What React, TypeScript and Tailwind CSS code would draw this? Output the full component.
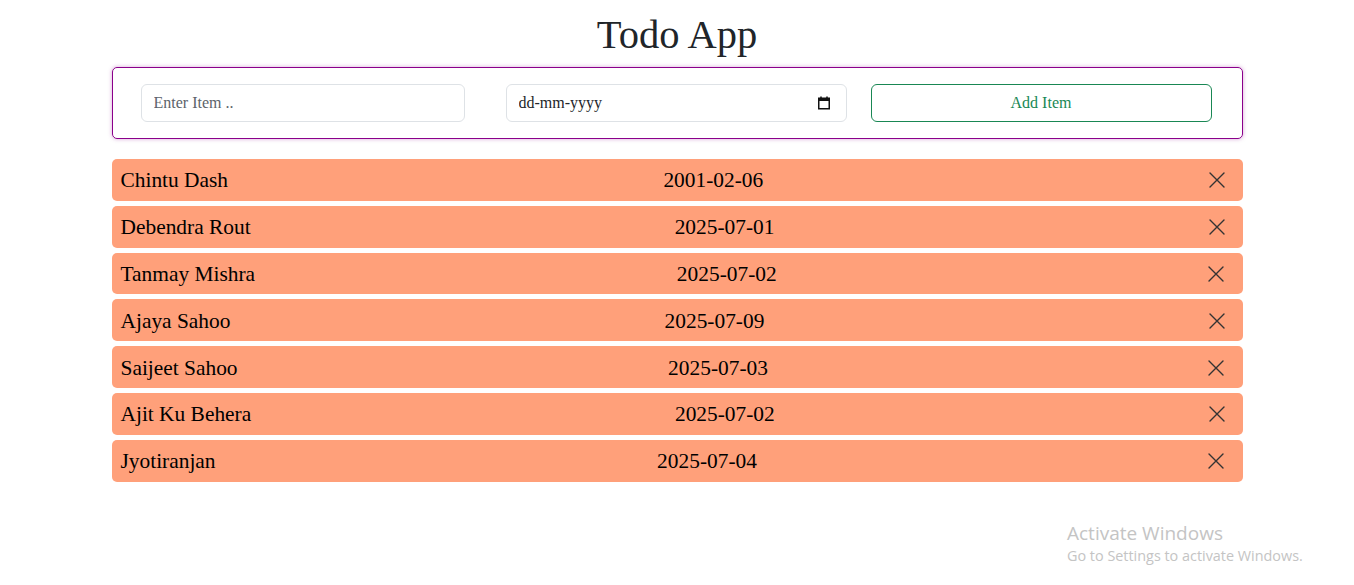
import { useState } from "react";

type Todo = { id: number; name: string; date: string };

const initialTodos: Todo[] = [
  { id: 1, name: "Chintu Dash", date: "2001-02-06" },
  { id: 2, name: "Debendra Rout", date: "2025-07-01" },
  { id: 3, name: "Tanmay Mishra", date: "2025-07-02" },
  { id: 4, name: "Ajaya Sahoo", date: "2025-07-09" },
  { id: 5, name: "Saijeet Sahoo", date: "2025-07-03" },
  { id: 6, name: "Ajit Ku Behera", date: "2025-07-02" },
  { id: 7, name: "Jyotiranjan", date: "2025-07-04" },
];

const serif = "font-['Liberation_Serif','Times_New_Roman',serif]";

export default function App() {
  const [todos, setTodos] = useState<Todo[]>(initialTodos);
  const [name, setName] = useState("");
  const [date, setDate] = useState("");

  const addItem = () => {
    if (!name.trim()) return;
    setTodos((t) => [...t, { id: Date.now(), name, date }]);
    setName("");
    setDate("");
  };

  return (
    <div className={`relative min-h-[585px] bg-white text-[#212529] ${serif}`}>
      <div className="mx-auto w-[1131px]">
        <h1 className="mt-[11px] mb-[8px] text-center text-[40.5px] leading-[48px] font-normal">
          Todo App
        </h1>

        {/* input row */}
        <div className="flex h-[72px] items-center rounded-[5px] border border-[#8b008b] pl-[28px] shadow-[0_0_4px_rgba(139,0,139,0.35)]">
          <input
            value={name}
            onChange={(e) => setName(e.target.value)}
            placeholder="Enter Item .."
            className="h-[38px] w-[324px] rounded-md border border-[#dee2e6] px-3 text-base text-[#212529] outline-none placeholder:text-[#5c636a]"
          />
          <div className="ml-[41px] flex h-[38px] w-[341px] items-center rounded-md border border-[#dee2e6] pl-3 pr-[14px]">
            <input
              value={date}
              onChange={(e) => setDate(e.target.value)}
              placeholder="dd-mm-yyyy"
              className="min-w-0 flex-1 bg-transparent text-base text-[#212529] outline-none placeholder:text-[#212529]"
            />
            <svg width="16" height="16" viewBox="0 0 16 16" aria-hidden>
              <rect x="2.75" y="3.25" width="10.5" height="10.5" fill="none" stroke="#111" strokeWidth="1.5" />
              <rect x="2" y="3" width="12" height="3" fill="#111" />
              <rect x="4.25" y="1.5" width="1.5" height="2" fill="#111" />
              <rect x="10.25" y="1.5" width="1.5" height="2" fill="#111" />
            </svg>
          </div>
          <button
            onClick={addItem}
            className="ml-[24px] h-[38px] w-[341px] rounded-md border border-[#198754] text-base text-[#198754]"
          >
            Add Item
          </button>
        </div>

        {/* list */}
        <div className="mt-[20px] flex flex-col gap-[5px]">
          {todos.map((todo) => (
            <div
              key={todo.id}
              className="flex h-[41.8px] items-center justify-between rounded-[5px] bg-[#ffa07a] pl-[9px] pr-2 pt-px text-[21.4px] text-black"
            >
              <span>{todo.name}</span>
              <span>{todo.date}</span>
              <button
                onClick={() => setTodos((t) => t.filter((x) => x.id !== todo.id))}
                className="flex h-8 items-center px-2"
                aria-label="Delete"
              >
                <svg width="20" height="20" viewBox="0 0 20 20" aria-hidden>
                  <path d="M3 3L17 17M17 3L3 17" stroke="#333" strokeWidth="1.4" strokeLinecap="round" />
                </svg>
              </button>
            </div>
          ))}
        </div>
      </div>

      {/* windows watermark */}
      <div className="pointer-events-none absolute left-[1067px] top-[511px] font-['Open_Sans','Noto_Sans',sans-serif] text-[#c4c4c4]">
        <div className="text-[19px] leading-[23px]">Activate Windows</div>
        <div className="text-[14.4px] leading-[22px]">Go to Settings to activate Windows.</div>
      </div>
    </div>
  );
}
